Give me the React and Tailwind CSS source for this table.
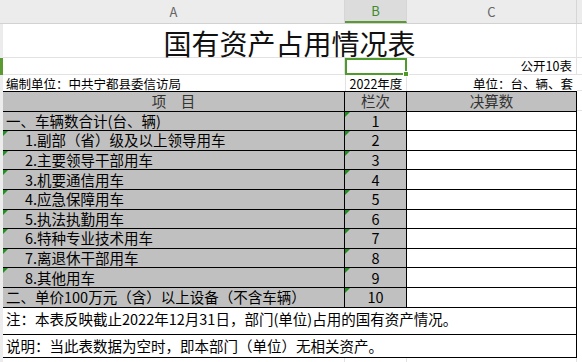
import React from "react";

const rows = [
  { label: "一、车辆数合计(台、辆)", no: "1", indent: false, mark: false },
  { label: "1.副部（省）级及以上领导用车", no: "2", indent: true, mark: true },
  { label: "2.主要领导干部用车", no: "3", indent: true, mark: true },
  { label: "3.机要通信用车", no: "4", indent: true, mark: true },
  { label: "4.应急保障用车", no: "5", indent: true, mark: true },
  { label: "5.执法执勤用车", no: "6", indent: true, mark: true },
  { label: "6.特种专业技术用车", no: "7", indent: true, mark: true },
  { label: "7.离退休干部用车", no: "8", indent: true, mark: true },
  { label: "8.其他用车", no: "9", indent: true, mark: true },
  { label: "二、单价100万元（含）以上设备（不含车辆）", no: "10", indent: false, mark: false },
];

const Mark = () => (
  <span className="absolute left-0 top-0 h-0 w-0 border-t-[5px] border-r-[5px] border-t-[#1f8f1f] border-r-transparent" />
);

const Strip = ({ active }) => (
  <div
    className={`w-[3px] shrink-0 ${active ? "bg-[#5b9a32]" : "bg-[#ececec]"}`}
  />
);

const Tail = () => <div className="flex-1 border-b border-[#e2e2e2]" />;

export default function App() {
  return (
    <div
      className="flex h-[362px] w-[582px] flex-col overflow-hidden bg-white text-black"
      style={{ fontFamily: '"Noto Sans CJK SC", "Noto Sans", sans-serif' }}
    >
      {/* column headers */}
      <div className="flex h-[24px] shrink-0 border-b border-[#d2d2d2] bg-[#ececec] text-[13px] text-[#666]">
        <div className="w-[3px]" />
        <div className="flex w-[342px] items-center justify-center border-r border-[#d6d6d6]">
          A
        </div>
        <div className="flex w-[62px] items-center justify-center border-b-2 border-r border-b-[#5b9a32] border-r-[#d6d6d6] bg-[#dcdcdc] text-[#3f8a2a]">
          B
        </div>
        <div className="flex w-[170px] items-center justify-center border-r border-[#d6d6d6]">
          C
        </div>
        <div className="flex-1" />
      </div>

      {/* title row */}
      <div className="flex h-[34px] shrink-0">
        <Strip />
        <div className="flex w-[574px] items-center justify-center border-b border-r border-[#e2e2e2] pt-[4px] text-[28px] font-normal leading-none text-[#111]">
          国有资产占用情况表
        </div>
        <Tail />
      </div>

      {/* row 2 */}
      <div className="flex h-[17px] shrink-0">
        <Strip active />
        <div className="w-[342px] border-b border-r border-[#e2e2e2]" />
        <div className="relative w-[62px] border-2 border-[#4f9a2c]">
          <span className="absolute -bottom-[4px] -right-[4px] h-[6px] w-[6px] border border-white bg-[#4f9a2c]" />
        </div>
        <div className="flex w-[170px] items-start justify-end border-b border-r border-[#e2e2e2] pr-[4px] pt-[2px] text-[12.5px] leading-[12px]">
          公开10表
        </div>
        <Tail />
      </div>

      {/* row 3 */}
      <div className="flex h-[16px] shrink-0 text-[12.5px] leading-[12px]">
        <Strip />
        <div className="flex w-[342px] items-center pl-[3px] pt-[1px]">
          编制单位：中共宁都县委信访局
        </div>
        <div className="flex w-[62px] items-center justify-center border-x border-[#e2e2e2] pt-[1px]">
          2022年度
        </div>
        <div className="flex w-[170px] items-center justify-end pr-[4px] pt-[1px]">
          单位：台、辆、套
        </div>
        <Tail />
      </div>

      {/* table */}
      <div className="flex shrink-0">
        <Strip />
        <div className="flex w-[574px] flex-col border-r border-t border-black text-[14.5px] leading-[14px]">
          <div className="flex h-[19.6px] border-b border-black bg-[#c0c0c0] text-[#333]">
            <div className="flex w-[342px] items-center justify-center border-r border-black">
              项　目
            </div>
            <div className="flex w-[62px] items-center justify-center border-r border-black">
              栏次
            </div>
            <div className="flex flex-1 items-center justify-center">决算数</div>
          </div>
          {rows.map((r) => (
            <div key={r.no} className="flex h-[19.6px] border-b border-black">
              <div
                className={`relative flex w-[342px] items-center border-r border-black bg-[#c0c0c0] ${
                  r.indent ? "pl-[22px]" : "pl-[3px]"
                }`}
              >
                {r.mark && <Mark />}
                {r.label}
              </div>
              <div className="relative flex w-[62px] items-center justify-center border-r border-black bg-[#c0c0c0]">
                <Mark />
                {r.no}
              </div>
              <div className="flex-1 bg-white" />
            </div>
          ))}
          <div className="flex h-[27px] items-center border-b border-black pb-[4px] pl-[3px]">
            注：本表反映截止2022年12月31日，部门(单位)占用的国有资产情况。
          </div>
          <div className="flex h-[23px] items-center border-b border-black pl-[3px]">
            说明：当此表数据为空时，即本部门（单位）无相关资产。
          </div>
        </div>
        <div className="flex flex-1 flex-col">
          <div className="h-[19.6px] border-b border-[#e2e2e2]" />
        </div>
      </div>

      {/* empty row below */}
      <div className="flex flex-1">
        <Strip />
        <div className="w-[342px] border-r border-[#e2e2e2]" />
        <div className="w-[62px] border-r border-[#e2e2e2]" />
        <div className="w-[170px] border-r border-[#e2e2e2]" />
        <div className="flex-1" />
      </div>
    </div>
  );
}
